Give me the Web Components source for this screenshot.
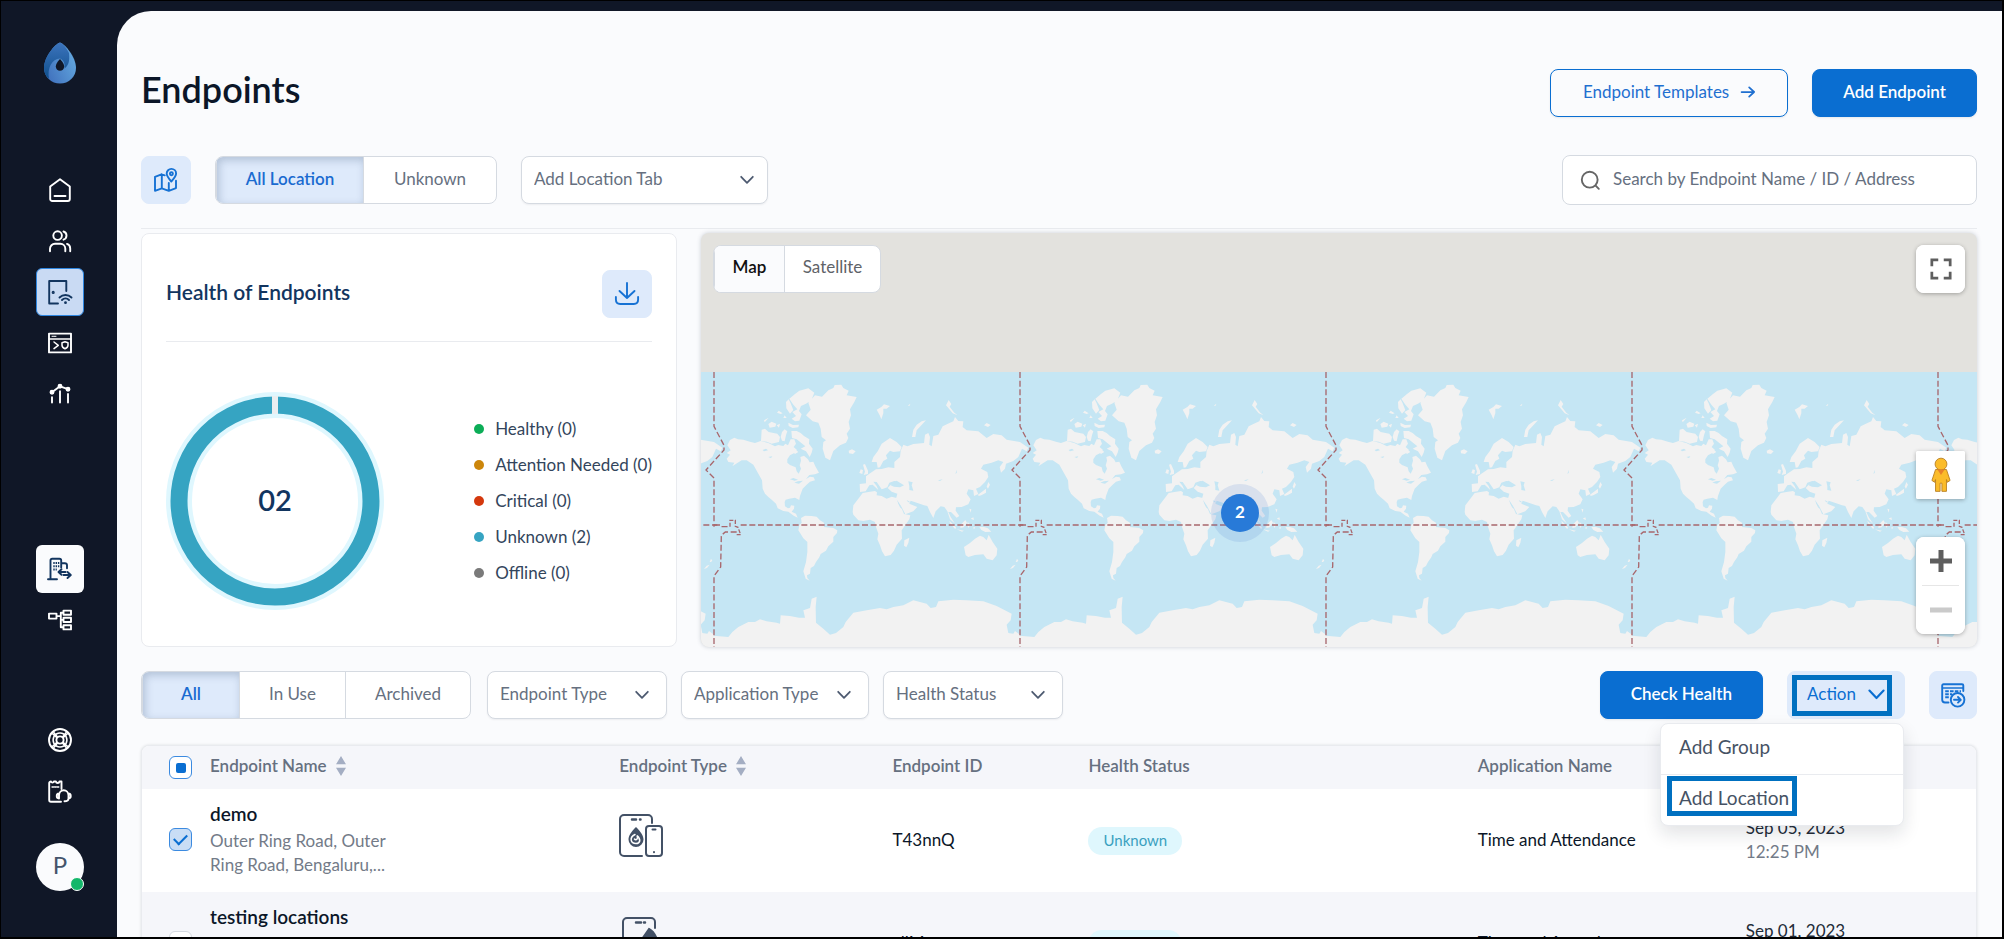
<!DOCTYPE html>
<html lang="en">
<head>
<meta charset="utf-8">
<title>Endpoints</title>
<style>
  :root {
    --ink: #0b1628; --navy: #12355f; --muted: #667080; --blue: #0a6ed1; --tint: #deeafb;
    --line: #d5dae1; --soft: #e9ebef; --page: #fafbfd; --rail: #101727;
  }
  * { box-sizing: border-box; }
  body { margin: 0; font: 400 17px/24px Lato, Carlito, sans-serif; color: var(--ink); background: var(--rail); }
</style>
</head>
<body>
<endpoint-app></endpoint-app>

<script>
const BASE = `*{box-sizing:border-box} button,input,select{font:inherit;color:inherit;margin:0} button{cursor:pointer} svg{display:block}`;
const define = (name, html, setup) => customElements.define(name, class extends HTMLElement {
  connectedCallback() {
    if (this.shadowRoot) return;
    const t = document.createElement('template');
    t.innerHTML = typeof html === 'function' ? html(this) : html;
    const root = this.attachShadow({ mode: 'open' });
    root.innerHTML = `<style>${BASE}</style>`;
    root.append(t.content.cloneNode(true));
    if (setup) setup(this, root);
  }
});

const ICONS = {
  home: '<path d="M12 1.3 2.2 8.4V21a2 2 0 0 0 2 2h15.6a2 2 0 0 0 2-2V8.4zM6.5 18h11"/>',
  users: '<circle cx="9.6" cy="6.6" r="4.3"/><path d="M2 22.3v-2.500a5 5 0 0 1 5-5h5.300a5 5 0 0 1 5 5v2.500M15.500 2.500a4.300 4.300 0 0 1 0 8.200M19 14.900c2 .7 3.200 2.300 3.200 4.500v2.900"/>',
  door: '<path d="M18.300 11V1H1.200v22.500H10"/><circle cx="5.200" cy="12.400" r=".6" fill="currentColor"/><path d="M11.500 17.500c3.400-3.400 8.600-3.400 12 0M14 20c2-2 5-2 7 0" stroke-width="1.900"/><circle cx="17.500" cy="22.700" r="1.400" fill="currentColor" stroke="none"/>',
  window: '<path d="M1 2.600h22v18.800H1z"/><path d="M1 8h22" stroke-width="1.500"/><path d="M4 5.300h4" stroke-width="1" stroke-dasharray="1 .6"/><path d="M6 11l4.300 3.300L6 17.600M14 11.800l3-1 3 1v2.400c0 1.700-1.300 2.800-3 3.600-1.700-.8-3-1.900-3-3.600z" stroke-width="1.500"/>',
  chart: '<g fill="currentColor"><circle cx="4" cy="10.300" r="1.500"/><circle cx="12" cy="4.300" r="1.500"/><circle cx="20" cy="7.200" r="1.500"/></g><path d="M4 10.300l8-6 8 2.900M4 15.300v5.200M12 9.300v11.200M20 12v8.500"/>',
  building: '<path d="M0 22.300h9M2.500 22V3.500c0-1 .6-1.700 1.700-1.700h7.300c1 0 1.700.7 1.700 1.700v7M13.500 6.200h3.300c1.400 0 2.200.8 2.200 2v3"/><path d="M5.300 6h6M5.300 9.300h6M5.300 12.600h3.500" stroke-width="2" stroke-dasharray="1.400 .9" stroke-linecap="butt"/><path d="M13.500 12.200L10.500 15l3 2.800M10.800 15h6.700M19.500 15l3.300 3-3.300 3M22.500 18h-7"/>',
  tree: '<path d="M1 5.600h7.500v5H1zM15.500 2.600H23v4.200h-7.500zM15.500 9.800H23V14h-7.500zM15.500 17.200H23v4.200h-7.500zM8.500 8.100h4.300M15.500 4.700h-2.700v14.600h2.700M12.800 11.900h2.700"/>',
  buoy: '<circle cx="12" cy="12" r="11"/><circle cx="12" cy="12" r="3.600"/><path d="M8.300 6c2.400-1.200 5-1.200 7.400 0M18 8.300c1.200 2.400 1.200 5 0 7.400M15.700 18c-2.400 1.200-5 1.200-7.400 0M6 15.700c-1.200-2.400-1.200-5 0-7.400M4.600 5.800l4.300 4M5.800 4.600L9.500 9M19.400 5.800l-4.300 4M18.200 4.600L14.500 9M4.600 18.200l4.300-4M5.800 19.400L9.500 15M19.400 18.200l-4.300-4M18.200 19.400L14.500 15" stroke-width="1.500"/>',
  ticket: '<path d="M13.500 10V2.500h-2c-.4 2-3.200 2-3.600 0h-2C5.500 4 3.500 4 3 2.500c-1 0-1.800.6-1.800 1.500v17c0 1.200.7 1.800 1.800 1.800h10"/><path d="M4 8h7" stroke-width="1.300" stroke-dasharray="1.600 1"/><path d="M11 16.500c0-7 9.500-7 9.500 0M11 14.500c-3 .3-3 4.700 0 5zM20.500 14.500c3 .3 3 4.700 0 5zM20.500 19.500c0 2-1 2.800-4 2.800"/>',
  mappin: '<path d="M7.500 6.300L1 8.800v14l6.800-2.500 7 2.500 7.200-2.700v-7.300M7.800 6.600v13.500M14.800 15v7.500M7.500 6.300l3.300 1"/><path d="M17.300 13.500c-3-3.300-4.600-5.500-4.600-7.900a4.700 4.700 0 0 1 9.400 0c0 2.400-1.700 4.600-4.800 7.900z"/><circle cx="17.400" cy="5.700" r="1.500"/>',
  download: '<path d="M12 1v15M4.500 9l7.500 7 7.500-7M.9 15v2.500c0 3 1.500 4.500 4.300 4.500h13.600c2.800 0 4.300-1.500 4.300-4.500V15"/>',
  grid: '<path d="M7.500 19.500H4c-1.800 0-2.800-1-2.800-2.700V2.500c0-.8.500-1.300 1.300-1.300h18.500c.8 0 1.300.5 1.300 1.300V8"/><path d="M1.500 5h20.500" stroke-width="1.300"/><path d="M4.200 8.300H20M4.200 11.300h7M4.200 14.300h4" stroke-dasharray="3.600 1.200" stroke-linecap="butt"/><circle cx="16.600" cy="16.800" r="6.800"/><path d="M13 16.800h6.500M17 14l2.800 2.800-2.800 2.800"/>',
  arrow: '<path d="M1 12h21M14 4l8.500 8-8.500 8"/>',
  chevron: '<path d="M2 6.500l10 10.500 10-10.500"/>',
  search: '<circle cx="11" cy="11" r="10"/><path d="M18.500 18.500L22.500 22.500"/>',
  full: '<path d="M2 9V2h7M15 2h7v7M22 15v7h-7M9 22H2v-7" stroke-linecap="butt" stroke-linejoin="miter"/>',
  plus: '<path d="M12 1v22M1 12h22" stroke-linecap="butt"/>',
  minus: '<path d="M1 12h22" stroke-linecap="butt"/>',
  sort: '<path d="M12 0L18 10H6zM12 24l6-10H6z" fill="currentColor" stroke="none"/>'
};
define('ui-icon', el => `<style>:host{display:block;flex:none;width:${el.getAttribute('size') || 24}px;height:${el.getAttribute('size') || 24}px}svg{width:100%;height:100%;overflow:visible}</style>
<svg viewBox="0 0 24 24" fill="none" stroke="currentColor" stroke-width="${el.getAttribute('weight') || 1.9}" stroke-linecap="round" stroke-linejoin="round" aria-hidden="true">${ICONS[el.getAttribute('name')]}</svg>`);

define('rail-item', el => `<style>
:host{display:block} a{display:grid;place-items:center;width:48px;height:48px;border-radius:6px;color:#fff;border:1px solid transparent}
:host([active]) a{background:#c9daf3;border-color:#2e86e0;color:var(--navy)} :host([light]) a{background:var(--page);color:var(--navy)}
</style><a href="#" aria-label="${el.getAttribute('label')}"><ui-icon name="${el.getAttribute('icon')}"></ui-icon></a>`);

define('app-rail', `<style>
:host{display:flex;flex-direction:column;align-items:center;padding:41px 0 0 2px}
.logo{width:32px;height:42px} nav{display:grid;gap:3px;margin-top:82px} nav+nav{margin-top:127px} nav+nav+nav{margin-top:72px}
.me{position:relative;width:48px;height:48px;border-radius:50%;background:var(--page);border:0;margin-top:28px;font-size:24px;color:#44546b;padding:0 0 5px}
.me i{position:absolute;right:0;bottom:0;width:14px;height:14px;border-radius:50%;background:#12b76a;border:1px solid #fff}
</style>
<svg class="logo" viewBox="0 0 32 42" aria-label="Logo"><defs><linearGradient id="a" x1="0" x2="1" y1="1" y2=".4"><stop stop-color="#3b69b8"/><stop offset="1" stop-color="#62a6de"/></linearGradient><linearGradient id="b" x1="0" x2="0" y1="0" y2="1"><stop stop-color="#3c74bd"/><stop offset="1" stop-color="#0f4f8c"/></linearGradient></defs>
<path d="M16 .5C11 2 0 15 0 26a16 15.500 0 0 0 32 0C32 15 21 2 16 .5z" fill="url(#a)"/>
<path d="M16 .5C11 2 0 15 0 26c0 4 1.500 8 5 11C3 26 8 17 16 16.500c4 2 5 5 4.500 10C24 24 26 20 25 11 22 5 19 1.500 16 .5z" fill="url(#b)"/>
<path d="M16 17c-3 3-4.200 5.600-4.200 7.600 0 5.600 8.400 5.600 8.400 0 0-2-1.200-4.600-4.200-7.600z" fill="#101727"/></svg>
<nav aria-label="Main"><rail-item icon="home" label="Home"></rail-item><rail-item icon="users" label="Users"></rail-item><rail-item icon="door" label="Endpoints" active></rail-item><rail-item icon="window" label="Policies"></rail-item><rail-item icon="chart" label="Reports"></rail-item></nav>
<nav aria-label="Sites"><rail-item icon="building" label="Sites" light></rail-item><rail-item icon="tree" label="Hierarchy"></rail-item></nav>
<nav aria-label="Help"><rail-item icon="buoy" label="Help"></rail-item><rail-item icon="ticket" label="Support"></rail-item></nav>
<button class="me">P<i></i></button>`);

define('ui-button', `<style>
:host{display:block;flex:none}
button{display:flex;align-items:center;justify-content:center;gap:12px;height:48px;width:100%;padding:0 32px 2px;border-radius:8px;border:1px solid var(--blue);background:transparent;color:#1f6fd0;white-space:nowrap;box-shadow:0 1px 2px rgba(16,24,40,.08)}
:host([kind=primary]) button{background:var(--blue);color:#fff;font-weight:600;padding:0 30px 2px}
:host([kind=tint]) button{background:var(--tint);border-color:var(--tint);color:var(--blue);box-shadow:none;padding:0 18px 2px}
:host([kind=icon]) button{background:var(--tint);border-color:var(--tint);color:#1672d4;box-shadow:none;padding:0;width:48px;border-radius:8px}
</style><button part="button"><slot></slot></button>`,
 (el, root) => { if (el.getAttribute('label')) root.querySelector('button').setAttribute('aria-label', el.getAttribute('label')); });

define('seg-control', el => {
  const items = el.getAttribute('items').split('|').map(s => s.split(':'));
  return `<style>
:host{display:flex;flex:none;height:48px;border:1px solid var(--line);border-radius:8px;background:#fff;overflow:hidden}
button{border:0;border-left:1px solid var(--line);background:transparent;color:var(--muted);padding:0 0 2px}
button:first-child{border-left:0}
button[aria-pressed=true]{background:var(--tint);color:#1a6bd0;font-weight:600;box-shadow:inset 2px 3px 8px rgba(15,40,80,.22)}
:host([plain]) button{color:#5f6368;padding-bottom:4px} :host([plain]) button[aria-pressed=true]{background:var(--page);color:#101010;box-shadow:none}
</style>` + items.map(([t, w], i) => `<button style="width:${w}px" aria-pressed="${i === 0}">${t}</button>`).join('');
}, (el, root) => root.addEventListener('click', e => {
  const b = e.target.closest('button');
  if (b) root.querySelectorAll('button').forEach(x => x.setAttribute('aria-pressed', x === b));
}));

define('ui-select', el => `<style>
:host{display:grid;align-items:center;flex:none;position:relative}
select,ui-icon{grid-area:1/1}
select{appearance:none;width:100%;height:48px;border:1px solid var(--line);border-radius:8px;background:#fff;padding:0 44px 3px 12px;color:var(--muted);box-shadow:0 1px 2px rgba(16,24,40,.06)}
ui-icon{justify-self:end;margin-right:var(--chevron-inset,14px);pointer-events:none;color:#4d5a70}
</style><select aria-label="${el.getAttribute('label')}"><option>${el.getAttribute('label')}</option></select><ui-icon name="chevron" size="14" weight="3"></ui-icon>`);

define('search-box', `<style>
:host{display:flex;align-items:center;gap:13px;height:50px;border:1px solid var(--line);border-radius:8px;background:#fff;padding:0 18px;color:#666}
input{border:0;outline:0;background:none;flex:1;min-width:0;padding:0 0 2px} input::placeholder{color:var(--muted);opacity:1}
</style><ui-icon name="search" size="19" weight="2.4"></ui-icon><input type="search" placeholder="Search by Endpoint Name / ID / Address" aria-label="Search by Endpoint Name / ID / Address">`);

define('health-card', `<style>
:host{display:block;border:1px solid var(--soft);border-radius:8px;background:#fff;padding:0 24px}
header{display:flex;align-items:center;justify-content:space-between;padding:36px 0 23px;border-bottom:1px solid var(--soft)}
h2{margin:0;padding-bottom:4px;font-size:21px;line-height:28px;font-weight:600;color:var(--navy)}
ui-button::part(button){width:50px}
section{display:flex;align-items:center;justify-content:space-between;margin-top:50px}
.ring{display:grid;place-items:center;width:218px;height:218px}.ring>*{grid-area:1/1}
b{font-size:29px;font-weight:600;color:var(--navy);padding-bottom:3px}
ul{list-style:none;margin:0;padding:0;display:grid;gap:12px;color:#33455c}
li{display:flex;align-items:center;gap:11px}li::before{content:"";width:10px;height:10px;border-radius:50%;background:var(--c)}
</style>
<header><h2>Health of Endpoints</h2><ui-button kind="icon" label="Download"><ui-icon name="download"></ui-icon></ui-button></header>
<section><div class="ring"><svg width="218" height="218" viewBox="0 0 218 218" fill="none" aria-hidden="true"><circle cx="109" cy="109" r="96" stroke="#dff7fe" stroke-width="26"/><circle cx="109" cy="109" r="96" stroke="#36a4c2" stroke-width="17"/><path d="M109 4v18" stroke="#ebeef0" stroke-width="6"/></svg><b>02</b></div>
<ul><li style="--c:#0cad57">Healthy (0)</li><li style="--c:#cc860b">Attention Needed (0)</li><li style="--c:#d4380d">Critical (0)</li><li style="--c:#36a4c2">Unknown (2)</li><li style="--c:#7a7a7a">Offline (0)</li></ul></section>`);

const LAND = `M82 240L90 224 103 217 114 222 130 223 150 229 165 233 182 227 205 233 225 243 235 239 250 242 256 235 264 240 272 222 283 222 288 235 281 245 291 254 283 263 270 270 262 282 262 292 270 299 287 306 290 318 296 325 303 310 299 300 303 286 301 275 312 271 324 282 329 291 340 289 346 303 357 322 345 327 328 329 318 341 330 334 341 336 345 345 330 349 320 358 308 370 300 392 298 404 285 397 268 400 257 403 254 410 255 423 264 429 270 427 273 420 283 421 282 430 275 439 288 445 293 457 281 451 265 439 250 437 233 429 228 415 215 403 205 395 195 385 188 370 186 345 175 325 160 298 140 285 125 285 112 293 97 303 103 292 85 290 80 280 90 268 80 263 92 255z
M183 227L185 193 195 190 206 200 232 205 240 215 237 230 215 235 200 229z M205 176l10-7 14 6-3 9-17 3z M192 165l14-8-12 14z M231 142l5-6 12 8-6 2z M230 180l10-5-3 12z M242 215l4-15 8-8 8 6-4 12-4 18-8-2z M265 172l14 7 18-1-2 8-17 2-12-6z M250 158l4-8 6 8z
M268 100L285 86 298 76 325 69 343 82 334 105 318 115 303 122 297 137 305 147 298 166 285 168 275 160 288 152 277 140 292 132 280 118z M258 110l8-8 6 12 8 20-10 11-11-16z
M274 197L290 197 302 203 312 212 328 222 327 235 338 250 335 262 329 275 318 258 302 250 316 243 303 232 290 222 276 218z M277 257l10-4 8 7-10 6z
M318 150L332 133 325 112 345 90 366 94 385 75 400 68 404 59 424 58 430 68 446 76 440 90 470 95 463 110 450 132 453 150 446 170 450 190 440 205 445 218 438 232 420 240 400 257 390 285 376 277 368 250 370 230 378 225 365 215 362 190 355 172 338 168z
M446 256l10-4 11 6-8 8-12-2z M478 323l4-11 7 2-2 12z M489 298l6-2 9 20 0 10-13 3 4-10z
M303 458L315 451 335 452 350 454 360 465 372 472 372 485 400 488 412 495 411 503 400 515 400 529 385 543 378 556 362 566 358 576 348 590 342 602 332 608 330 625 321 630 322 638 329 646 317 640 310 618 318 590 322 560 322 530 310 519 295 495 298 480 305 472z
M488 383L505 380 525 377 531 381 530 390 545 392 560 400 575 394 590 398 595 415 606 432 612 446 631 450 628 462 612 485 605 495 606 520 590 538 582 556 572 569 555 573 546 558 540 540 532 522 535 505 528 485 525 470 510 463 490 467 475 465 460 448 458 440 460 420 475 400z M613 525l15-8-3 16-6 13-7-5z
M515 290L520 275 533 258 545 235 570 218 590 230 605 245 600 258 580 260 570 256 558 270 562 280 550 287 540 306 533 307 530 290 518 290z
M480 380L479 356 498 354 498 333 508 325 528 312 545 311 565 306 583 308 583 290 600 275 602 256 610 238 622 243 640 236 672 233 675 208 685 203 690 215 688 238 695 243 700 212 715 208 728 183 750 172 760 168 765 155 775 167 790 168 788 185 800 195 835 198 860 218 880 206 905 210 920 223 960 230 985 247 980 258 966 250 955 275 940 287 918 295 915 310 903 322 899 305 910 290 895 285 875 292 850 298 843 310 862 320 865 335 855 350 840 365 828 370 835 386 822 392 820 375 805 372 800 385 812 402 805 417 785 425 768 426 767 436 778 452 770 457 753 440 745 440 752 455 765 475 750 462 742 438 733 425 722 423 707 438 700 458 690 440 682 422 672 420 650 412 632 406 628 415 652 425 640 438 616 447 603 422 588 400 592 385 575 379 563 368 572 358 600 354 583 347 568 352 562 366 550 370 545 372 530 350 520 349 530 362 535 374 518 358 508 360 497 378z
M636 215L640 193 650 178 665 168 678 165 662 182 650 195 646 215z M738 120l8-16 8 12-5 8 14 18 10 8-15-6-8-10z M623 121l8-6-2 6z M852 180l8-7 12 6-8 6z M530 133l14-8 8-8 18 5-10 8-10 0 0 14-6 18-5-12z
M865 350l5 8-6 12 -4-6z M834 388l14-10 10-8 0 12-14 8-8 2z M812 460l8-4 2 8z M808 430l6 2-2 10z M748 466l20 20-2 6-16-18z M782 478l14-14 5 8-10 14-10 2z M770 492l22 4-6 3z M803 470l8 8-6 10-3-8z M838 485l14 0 12 4 10 10-18 1-12-6z M818 487l8-2-3 6z
M792 545L810 533 825 520 840 511 850 515 860 525 866 508 878 530 892 550 890 570 878 585 860 580 850 567 825 569 805 575 797 570z M930 611l8-10 9-3-8 10z M947 590l4-10 4 6-4 4z
M42 811L85 815 97 800 115 785 145 770 165 770 180 762 200 768 230 772 240 775 242 750 270 752 297 757 315 757 310 735 330 728 335 700 350 694 347 725 348 772 370 790 390 808 408 803 430 785 437 770 460 742 500 735 540 728 560 732 580 725 610 720 640 705 680 715 692 728 708 725 715 708 760 703 800 705 850 708 890 722 935 745 932 765 920 778 925 803 940 805 945 797 960 808V850H42z`;
const LAKES = 'M572 360L580 350 590 346 612 360 600 366 582 364zM625 348L638 351 635 360 640 376 628 374 628 362zM620 404l14 8-10-2zM590 402l16 28-6-4zM270 342l10-4 14 5-10 3zM283 352l10-4 16-2-12 9zM714 345l14-3-8 5zM766 325l5-12-1 10zM188 254l10-4 6 5-12 3zM205 275l12-2-4 5z';
define('world-map', `<style>
:host{display:grid;grid-template-rows:139px 1fr;position:relative;border-radius:8px;background:#e3e2de;overflow:hidden;box-shadow:0 0 4px rgba(60,70,90,.25)}
.world{grid-row:2;width:100%;height:100%}
.type{position:absolute;left:12px;top:12px}
.side{position:absolute;right:12px;top:12px;bottom:13px;display:flex;flex-direction:column;width:49px}
.side button{display:grid;place-items:center;width:49px;height:48px;border:0;background:#fff;padding:0;color:#5e5e5e}
.box{border-radius:8px;background:#fff;box-shadow:0 1px 4px rgba(0,0,0,.3);overflow:hidden}
.peg{margin-top:auto;border-radius:2px}.zoom{margin-top:38px}
.zoom hr{margin:0 6px;border:0;border-top:1px solid #e6e6e6} .zoom button:last-child{color:#cacaca}
.pin{position:absolute;left:539px;top:280px;width:38px;height:38px;margin:-19px;border-radius:50%;border:0;background:#287ad8;color:#fff;font-weight:700;padding:0 0 3px;box-shadow:0 0 0 10px rgba(80,130,210,.16)}
</style>
<svg class="world" aria-label="World map"><defs>
<g id="t"><path d="${LAND}" fill="#f2f2f2"/><path d="${LAKES}" fill="#c5e6f4"/>
<g fill="none" stroke="#a8666c" stroke-width="4" stroke-dasharray="18 8"><path d="M42 20V183L72 240V254L18 314 42 338V484"/><path d="M42 479H62l2 5H88"/><path d="M90 484V465h16v18l8 3 8 22h-12" stroke-dasharray="12 5"/><path d="M110 500H76L64 510 62 605 42 632V850"/><path d="M122 479H970"/></g></g>
<pattern id="w" patternUnits="userSpaceOnUse" x="13" y="0" width="306" height="280"><rect width="306" height="280" fill="#c5e6f4"/><g transform="scale(.333333)"><use href="#t" x="-42" y="-20"/><use href="#t" x="876" y="-20"/><use href="#t" x="-960" y="-20"/></g></pattern></defs>
<rect width="100%" height="100%" fill="url(#w)"/></svg>
<seg-control class="type" plain items="Map:70|Satellite:96"></seg-control>
<button class="pin">2</button>
<div class="side"><div class="box"><button aria-label="Full screen"><ui-icon name="full" size="22" weight="3"></ui-icon></button></div>
<div class="box peg"><button aria-label="Street view"><svg width="20" height="38" viewBox="0 0 22 38"><g fill="#fbbc2a" stroke="#b98022"><path d="M5 13h12l4 12-3 2-1-3v13h-5v-9h-2v9H5V24l-1 3-3-2z"/><circle cx="11" cy="7" r="6.500"/></g><path d="M7 13h8l-4 6z" fill="#e8812a"/></svg></button></div>
<div class="box zoom"><button aria-label="Zoom in"><ui-icon name="plus" size="24" weight="5"></ui-icon></button><hr><button aria-label="Zoom out"><ui-icon name="minus" size="24" weight="5"></ui-icon></button></div></div>`);

define('action-menu', `<style>
:host{display:block;position:relative;flex:none}
ui-button{width:118px}
ul{position:absolute;z-index:2;right:1px;top:52px;width:244px;margin:0;padding:0;list-style:none;background:#fff;border:1px solid var(--soft);border-radius:8px;box-shadow:0 8px 18px rgba(16,24,40,.12)}
li+li{border-top:1px solid var(--soft)}
a{display:flex;align-items:center;height:50px;padding:0 18px 5px;font-size:19px;color:#465264;text-decoration:none}
.mark{position:absolute;z-index:3;border:5px solid #0070c0;pointer-events:none}
.m1{left:5px;top:4px;width:100px;height:41px}.m2{left:-120px;top:105px;width:130px;height:40px}
</style><ui-button kind="tint">Action <ui-icon name="chevron" size="17" weight="3"></ui-icon></ui-button>
<ul><li><a href="#">Add Group</a></li><li><a href="#">Add Location</a></li></ul><span class="mark m1"></span><span class="mark m2"></span>`);

define('device-icon', el => `<style>:host{display:block;margin-bottom:8px;color:#435166}</style><svg width="44" height="43" viewBox="0 0 44 43" fill="none" stroke="currentColor" stroke-width="2" stroke-linecap="round" aria-hidden="true">` +
(el.getAttribute('kind') === 'phone'
 ? '<path d="M36 11V5a4 4 0 0 0-4-4H8a4 4 0 0 0-4 4v36"/><path d="M17 5.500h5M25 5.500h1" stroke-width="2.500"/><path d="M30 12l-9 13h18c-2-6-5-11-9-13z" fill="currentColor"/>'
 : '<path d="M33 9V5a4 4 0 0 0-4-4H5a4 4 0 0 0-4 4v33a4 4 0 0 0 4 4h18"/><path d="M13 5.500h4M21 5.500h.500" stroke-width="2.500"/><rect x="27" y="12" width="16" height="30" rx="3"/><path d="M33.500 15.500h3M35 38v.2" stroke-width="2"/><path d="M17 13c-5 5-7.500 9-7.500 12.500a7.500 7.500 0 0 0 15 0C24.500 22 22 18 17 13z" fill="currentColor" stroke="none"/><path d="M16 20.500c-6 3-4.500 9 1 9 4 0 5.500-4 1-8 1.500 3.500-1 5.500-2.500 3.500" stroke="#fff" stroke-width="1.500"/>') + `</svg>`);

define('endpoint-table', `<style>
:host{display:block;border:1px solid var(--soft);border-radius:8px;overflow:hidden;background:#fff;box-shadow:0 0 3px rgba(16,24,40,.12)}
table{width:100%;border-collapse:collapse;table-layout:fixed}
th{height:43px;padding:0 0 3px;text-align:left;font-weight:600;color:var(--muted)} thead,tbody tr:nth-child(even){background:#f5f6fa}
th:first-child{padding-bottom:0}
th span{display:flex;align-items:center;gap:4px} th ui-icon{color:#a4aec3}
td{height:103px;padding:0 0 2px;vertical-align:middle}
td:first-child,th:first-child{padding-left:27px}
td p{margin:3px 0 0;line-height:24px;color:#737b88;min-height:48px} strong{font-weight:600;font-size:19px;display:block}
.date{color:#222b38}.date p{margin:0;min-height:24px}
.pill{display:inline-block;height:28px;border-radius:14px;background:#dff7fd;color:#3aa0bf;font-size:15px;line-height:26px;padding:0 15px;margin-top:2px}
input{appearance:none;display:grid;place-items:center;width:23px;height:23px;border:1px solid var(--line);border-radius:6px;background:#fff}
input:indeterminate{border-color:#3b8ae0} input:indeterminate::before{content:"";width:10px;height:10px;border-radius:2px;background:var(--blue)}
input:checked{border-color:#3b8ae0;background:#c9ddf5} input:checked::before{content:"";width:11px;height:6px;margin-bottom:4px;border:solid var(--blue);border-width:0 0 2px 2px;transform:rotate(-45deg)}
</style>
<table><colgroup><col style="width:68px"><col style="width:409px"><col style="width:273px"><col style="width:196px"><col style="width:389px"><col style="width:268px"><col style="width:230px"></colgroup>
<thead><tr><th><input id="all" type="checkbox" aria-label="Select all"></th><th><span>Endpoint Name <ui-icon name="sort" size="20"></ui-icon></span></th><th><span>Endpoint Type <ui-icon name="sort" size="20"></ui-icon></span></th><th>Endpoint ID</th><th>Health Status</th><th>Application Name</th><th></th></tr></thead>
<tbody>
<tr><td><input type="checkbox" checked aria-label="Select demo"></td><td><strong>demo</strong><p>Outer Ring Road, Outer<br>Ring Road, Bengaluru,...</p></td><td><device-icon></device-icon></td><td>T43nnQ</td><td><span class="pill">Unknown</span></td><td>Time and Attendance</td><td class="date">Sep 05, 2023<p>12:25 PM</p></td></tr>
<tr><td><input type="checkbox" aria-label="Select testing locations"></td><td><strong>testing locations</strong><p></p></td><td><device-icon kind="phone"></device-icon></td><td>allM</td><td><span class="pill">Unknown</span></td><td>Time and Attendance</td><td class="date">Sep 01, 2023<p></p></td></tr>
</tbody></table>`, (el, root) => { root.getElementById('all').indeterminate = true; });

define('endpoint-app', `<style>
:host{display:grid;grid-template-columns:116px 1fr;height:100vh;overflow:hidden;border:solid #000;border-width:1px 2px 2px 1px;background:var(--rail)}
main{margin-top:10px;min-width:0;background:var(--page);border-top-left-radius:34px;padding:58px 25px 0 24px;overflow:hidden}
header,.row{display:flex;align-items:center}
h1{margin:0 auto 0 0;font-size:36px;line-height:44px;font-weight:600;padding-bottom:8px}
header{gap:24px;height:48px}
.where{margin-top:38px;gap:24px;padding-bottom:23px;border-bottom:1px solid var(--soft)}
.where ui-button::part(button){width:50px}.where ui-select{width:247px}.where search-box{width:415px;margin-left:auto}
.cards{display:grid;grid-template-columns:536px 1fr;gap:24px;height:414px;margin:4px 0 24px}
.filters{gap:14px;margin-bottom:26px;height:48px;--chevron-inset:18px}.filters seg-control{margin-right:2px}.filters ui-select{width:180px}.filters ui-select:nth-of-type(2){width:188px}
.end{display:flex;gap:24px;margin-left:auto}
</style>
<app-rail></app-rail>
<main>
<header><h1>Endpoints</h1><ui-button>Endpoint Templates <ui-icon name="arrow" size="14" weight="3"></ui-icon></ui-button><ui-button kind="primary">Add Endpoint</ui-button></header>
<div class="row where"><ui-button kind="icon" label="Map view"><ui-icon name="mappin"></ui-icon></ui-button><seg-control items="All Location:147|Unknown:133"></seg-control><ui-select label="Add Location Tab"></ui-select><search-box></search-box></div>
<div class="cards"><health-card></health-card><world-map></world-map></div>
<div class="row filters"><seg-control items="All:97|In Use:106|Archived:125"></seg-control><ui-select label="Endpoint Type"></ui-select><ui-select label="Application Type"></ui-select><ui-select label="Health Status"></ui-select>
<div class="end"><ui-button kind="primary">Check Health</ui-button><action-menu></action-menu><ui-button kind="icon" label="Columns"><ui-icon name="grid"></ui-icon></ui-button></div></div>
<endpoint-table></endpoint-table>
</main>`);
</script>
</body>
</html>
